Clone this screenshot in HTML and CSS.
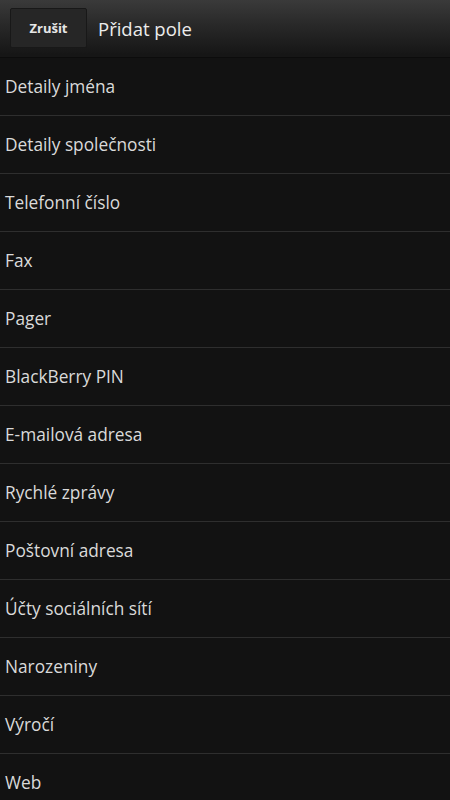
FILE: index.html
```html
<!DOCTYPE html>
<html lang="cs">
<head>
<meta charset="utf-8">
<link rel="stylesheet" href="styles.css">
</head>
<body>
<header class="bar">
  <button class="btn">Zrušit</button>
  <h1 class="title">Přidat pole</h1>
</header>
<ul class="list">
  <li class="item">Detaily jména</li>
  <li class="item">Detaily společnosti</li>
  <li class="item">Telefonní číslo</li>
  <li class="item">Fax</li>
  <li class="item">Pager</li>
  <li class="item">BlackBerry PIN</li>
  <li class="item">E-mailová adresa</li>
  <li class="item">Rychlé zprávy</li>
  <li class="item">Poštovní adresa</li>
  <li class="item">Účty sociálních sítí</li>
  <li class="item">Narozeniny</li>
  <li class="item">Výročí</li>
  <li class="item">Web</li>
</ul>
</body>
</html>
```
FILE: styles.css
```css
html, body {
  margin: 0;
  padding: 0;
  background: #121212;
  height: 100%;
  overflow: hidden;
}
body {
  font-family: "Open Sans", "Noto Sans", sans-serif;
  color: #dadada;
}
.bar {
  height: 58px;
  box-sizing: border-box;
  display: flex;
  align-items: center;
  padding: 0 10px 1px;
  gap: 11px;
  background: linear-gradient(#3a3a3a, #2a2a2a 40%, #161616 95%);
  border-bottom: 1px solid #0c0c0c;
}
.btn {
  width: 77px;
  height: 40px;
  background: #262626;
  border: 1px solid #181818;
  border-radius: 2px;
  color: #e6e6e6;
  font-family: inherit;
  font-weight: 700;
  font-size: 13px;
  padding: 0;
}
.title {
  margin: 0;
  font-weight: 400;
  font-size: 18.5px;
  color: #ececec;
}
.list {
  list-style: none;
  margin: 0;
  padding: 0;
}
.item {
  height: 57px;
  border-bottom: 1px solid #2e2e2e;
  display: flex;
  align-items: center;
  padding-left: 5px;
  font-size: 17.3px;
}
```
